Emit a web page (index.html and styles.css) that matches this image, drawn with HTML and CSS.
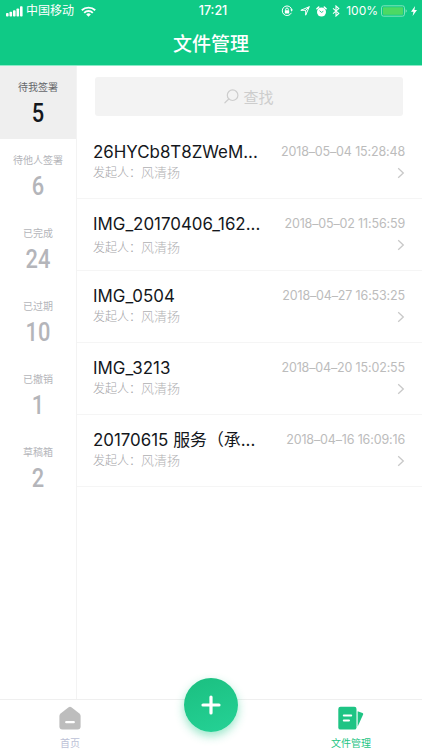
FILE: index.html
```html
<!DOCTYPE html>
<html lang="zh-CN">
<head>
    <meta charset="UTF-8">
    <meta name="viewport" content="width=device-width, initial-scale=1.0">
    <title>文件管理</title>
    <link rel="stylesheet" href="styles.css">
</head>
<body>
    <div class="app">
        <header class="header">
            <div class="status-bar">
                <div class="status-left">
                    <svg class="signal" width="17" height="11" viewBox="0 0 17 11" fill="#fff">
                        <rect x="0" y="7" width="2.6" height="3.5" rx="0.8"/>
                        <rect x="3.5" y="5.8" width="2.6" height="4.7" rx="0.8"/>
                        <rect x="7" y="4.2" width="2.6" height="6.3" rx="0.8"/>
                        <rect x="10.5" y="2.4" width="2.6" height="8.1" rx="0.8"/>
                        <rect x="14" y="0.3" width="2.6" height="10.2" rx="0.8"/>
                    </svg>
                    <span class="carrier">中国移动</span>
                    <svg class="wifi" width="15" height="11" viewBox="0 0 15 11" fill="none" stroke="#fff" stroke-width="1.9">
                        <path d="M0.8 4.3a9.6 9.6 0 0 1 13.4 0"/>
                        <path d="M3.2 6.8a6.1 6.1 0 0 1 8.6 0"/>
                        <path d="M7.5 10.8L5.2 8.4a3.3 3.3 0 0 1 4.6 0z" fill="#fff" stroke="none"/>
                    </svg>
                </div>
                <span class="clock">17:21</span>
                <div class="status-right">
                    <svg width="12" height="12" viewBox="0 0 12 12" fill="none" stroke="#fff" stroke-width="1">
                        <path d="M10.4 7.8A4.8 4.8 0 1 1 10.8 5"/>
                        <path d="M9.2 4.6h2.6L10.8 6.8z" fill="#fff" stroke="none"/>
                        <path d="M4.7 5.4V4.3a1.3 1.3 0 0 1 2.6 0v1.1"/>
                        <rect x="3.8" y="5.2" width="4.4" height="3.4" rx="0.4" fill="#fff" stroke="none"/>
                    </svg>
                    <svg class="location" width="10" height="10" viewBox="0 0 10 10" fill="none" stroke="#fff" stroke-width="1" stroke-linejoin="round">
                        <path d="M9.3 0.7L5.7 9.2V4.3H0.8z"/>
                        <path d="M9.3 0.7L5.7 4.3"/>
                    </svg>
                    <svg class="alarm" width="11" height="11" viewBox="0 0 11 11">
                        <circle cx="5.5" cy="6" r="4.5" fill="#fff"/>
                        <path d="M0.9 2.7L2.7 1.1M10.1 2.7L8.3 1.1" stroke="#fff" stroke-width="1.5" stroke-linecap="round"/>
                        <path d="M3.5 4.7L5.5 6.4L7.3 5.3" fill="none" stroke="#0fca86" stroke-width="0.9"/>
                    </svg>
                    <svg class="bluetooth" width="8" height="12" viewBox="0 0 8 12" fill="none" stroke="#fff" stroke-width="1.1">
                        <path d="M1 3.3L6.8 8.4L4 11V1L6.8 3.6L1 8.7"/>
                    </svg>
                    <span class="percent">100%</span>
                    <svg class="battery" width="26" height="12" viewBox="0 0 26 12">
                        <rect x="0.5" y="0.8" width="23" height="10.4" rx="2" fill="none" stroke="#7fe5bb" stroke-width="1"/>
                        <rect x="2" y="2.3" width="20" height="7.4" rx="0.8" fill="#4cd964"/>
                        <path d="M24.6 4.2v3.6q1.2-0.5 1.2-1.8t-1.2-1.8z" fill="#7fe5bb"/>
                    </svg>
                    <svg class="bolt" width="6" height="10" viewBox="0 0 6 10" fill="#fff">
                        <path d="M4.1 0L0 5.7h2.5L1.6 10L6 4.1H3.4z"/>
                    </svg>
                </div>
            </div>
            <h1 class="title">文件管理</h1>
        </header>

        <div class="content">
            <nav class="sidebar">
                <div class="category active">
                    <div class="label">待我签署</div>
                    <div class="count">5</div>
                </div>
                <div class="category">
                    <div class="label">待他人签署</div>
                    <div class="count">6</div>
                </div>
                <div class="category">
                    <div class="label">已完成</div>
                    <div class="count">24</div>
                </div>
                <div class="category">
                    <div class="label">已过期</div>
                    <div class="count">10</div>
                </div>
                <div class="category">
                    <div class="label">已撤销</div>
                    <div class="count">1</div>
                </div>
                <div class="category">
                    <div class="label">草稿箱</div>
                    <div class="count">2</div>
                </div>
            </nav>

            <main class="main">
                <div class="search">
                    <svg width="15" height="15" viewBox="0 0 15 15" fill="none" stroke="#cdcdcd" stroke-width="1.2" stroke-linecap="round">
                        <circle cx="8.6" cy="6.2" r="5.3"/>
                        <path d="M4.8 10L0.9 13.8"/>
                    </svg>
                    <span>查找</span>
                </div>
                <div class="file">
                    <div class="row">
                        <span class="name">26HYCb8T8ZWeM...</span>
                        <span class="date">2018–05–04 15:28:48</span>
                    </div>
                    <div class="row">
                        <span class="sender">发起人：<span class="person">风清扬</span></span>
                        <svg class="arrow" width="8" height="12" viewBox="0 0 8 12"><path d="M1.2 1.2L6.3 6L1.2 10.8"/></svg>
                    </div>
                </div>
                <div class="file second">
                    <div class="row">
                        <span class="name">IMG_20170406_162...</span>
                        <span class="date">2018–05–02 11:56:59</span>
                    </div>
                    <div class="row">
                        <span class="sender">发起人：<span class="person">风清扬</span></span>
                        <svg class="arrow" width="8" height="12" viewBox="0 0 8 12"><path d="M1.2 1.2L6.3 6L1.2 10.8"/></svg>
                    </div>
                </div>
                <div class="file">
                    <div class="row">
                        <span class="name">IMG_0504</span>
                        <span class="date">2018–04–27 16:53:25</span>
                    </div>
                    <div class="row">
                        <span class="sender">发起人：<span class="person">风清扬</span></span>
                        <svg class="arrow" width="8" height="12" viewBox="0 0 8 12"><path d="M1.2 1.2L6.3 6L1.2 10.8"/></svg>
                    </div>
                </div>
                <div class="file">
                    <div class="row">
                        <span class="name">IMG_3213</span>
                        <span class="date">2018–04–20 15:02:55</span>
                    </div>
                    <div class="row">
                        <span class="sender">发起人：<span class="person">风清扬</span></span>
                        <svg class="arrow" width="8" height="12" viewBox="0 0 8 12"><path d="M1.2 1.2L6.3 6L1.2 10.8"/></svg>
                    </div>
                </div>
                <div class="file">
                    <div class="row">
                        <span class="name">20170615 服务（承...</span>
                        <span class="date">2018–04–16 16:09:16</span>
                    </div>
                    <div class="row">
                        <span class="sender">发起人：<span class="person">风清扬</span></span>
                        <svg class="arrow" width="8" height="12" viewBox="0 0 8 12"><path d="M1.2 1.2L6.3 6L1.2 10.8"/></svg>
                    </div>
                </div>
            </main>
        </div>

        <footer class="tabbar">
            <div class="tab">
                <svg width="22" height="24" viewBox="0 0 22 24">
                    <path d="M9.6 1.3q1.4-1 2.8 0l8 6.2q1.2 1 1.2 2.5v10.5q0 3-3 3H3.4q-3 0-3-3V10q0-1.5 1.2-2.5z" fill="#bdbdbd"/>
                    <path d="M7.2 16.2h7.6" stroke="#fff" stroke-width="2.2" stroke-linecap="round"/>
                </svg>
                <span>首页</span>
            </div>
            <button class="add">
                <svg width="20" height="20" viewBox="0 0 20 20" stroke="#fff" stroke-width="3.2" stroke-linecap="round">
                    <path d="M10 2v16M2 10h16"/>
                </svg>
            </button>
            <div class="tab current">
                <svg width="26" height="24" viewBox="0 0 26 24">
                    <path d="M19.6 5.2l4.9 1.9q1 0.4 0.6 1.4l-5.5 12.3z" fill="#1ec484"/>
                    <rect x="0.3" y="0.8" width="18.2" height="22.8" rx="2.2" fill="#1ec484"/>
                    <path d="M5.8 9.6h7.4M5.8 14.4h5.2" stroke="#fff" stroke-width="2" stroke-linecap="round"/>
                </svg>
                <span>文件管理</span>
            </div>
        </footer>
    </div>
</body>
</html>
```
FILE: styles.css
```css
* {
    margin: 0;
    padding: 0;
    box-sizing: border-box;
}

body {
    font-family: Inter, "Noto Sans CJK SC", sans-serif;
    background-color: #fff;
    color: #14171c;
    overflow: hidden;
}

svg {
    display: block;
    flex-shrink: 0;
}

.app {
    display: flex;
    flex-direction: column;
    width: 100%;
    height: 100vh;
}

.header {
    height: 66px;
    background-color: #0fca86;
    border-bottom: 1px solid #8ceac8;
    color: #fff;
}

.status-bar {
    display: grid;
    grid-template-columns: 1fr auto 1fr;
    align-items: center;
    height: 22px;
    padding: 0 5px 0 6px;
    font-size: 12px;
    line-height: 22px;
}

.status-left,
.status-right {
    display: flex;
    align-items: center;
    height: 22px;
}

.status-right {
    justify-content: flex-end;
}

.carrier {
    margin: 0 7px 0 3px;
}

.clock {
    padding-left: 3px;
    font-weight: 500;
    font-size: 12.5px;
}

.location {
    margin-left: 7px;
}

.alarm {
    margin-left: 6px;
}

.bluetooth {
    margin-left: 5px;
}

.percent {
    margin: 0 3px 0 6px;
}

.bolt {
    margin-left: 4px;
}

.title {
    padding-top: 2px;
    font-size: 19px;
    font-weight: 500;
    line-height: 42px;
    text-align: center;
}

.content {
    display: flex;
    flex: 1;
}

.sidebar {
    width: 77px;
    border-right: 1px solid #f3f3f3;
}

.category {
    height: 73px;
    padding-top: 13px;
    text-align: center;
    color: #b4b5ba;
}

.category.active {
    background-color: #efefef;
    color: #14171c;
}

.label {
    font-size: 10px;
    line-height: 16px;
}

.active .label {
    color: #66676b;
}

.count {
    padding-top: 1px;
    font-family: Roboto, sans-serif;
    font-size: 26px;
    font-weight: 500;
    line-height: 34px;
    transform: scaleX(0.84);
}

.main {
    flex: 1;
    padding-top: 11px;
}

.search {
    display: flex;
    justify-content: center;
    align-items: center;
    gap: 4px;
    height: 39px;
    margin: 0 19px 11px 18px;
    border-radius: 3px;
    background-color: #f3f3f3;
    color: #cdcdcd;
    font-size: 15px;
}

.file {
    height: 72px;
    padding: 14px 17px 0 16px;
    border-bottom: 1px solid #f5f5f5;
}

.row {
    display: flex;
    justify-content: space-between;
    align-items: center;
    height: 22px;
    line-height: 22px;
    white-space: nowrap;
}

.row + .row {
    height: 20px;
}

.row + .row .sender {
    margin-top: -1px;
}

.second .row + .row .sender {
    margin-top: 4px;
}

.name {
    font-size: 16.9px;
}

.date {
    color: #bcbcbc;
    font-size: 12.5px;
    letter-spacing: -0.15px;
}

.sender {
    color: #a5a5a8;
    font-size: 12px;
    font-weight: 300;
}

.person {
    color: #b0b0b3;
    font-size: 13px;
}

.arrow {
    fill: none;
    stroke: #c8c8c8;
    stroke-width: 1.3;
}

.tabbar {
    display: grid;
    grid-template-columns: 141px 140px 141px;
    height: 51px;
    border-top: 1px solid #efefef;
}

.tab {
    display: flex;
    flex-direction: column;
    align-items: center;
    padding: 6px 1px 0 0;
    color: #bcc1d6;
    font-size: 10px;
    line-height: 14px;
}

.tab span {
    margin-top: 6px;
}

.tab.current {
    color: #1ec484;
}

.add {
    display: flex;
    justify-content: center;
    align-items: center;
    width: 54px;
    height: 54px;
    margin: -22px auto 0;
    border: none;
    border-radius: 50%;
    background: linear-gradient(160deg, #1bbf80, #25d296);
    box-shadow: 0 4px 10px rgba(30, 200, 135, 0.45);
    cursor: pointer;
}
```
